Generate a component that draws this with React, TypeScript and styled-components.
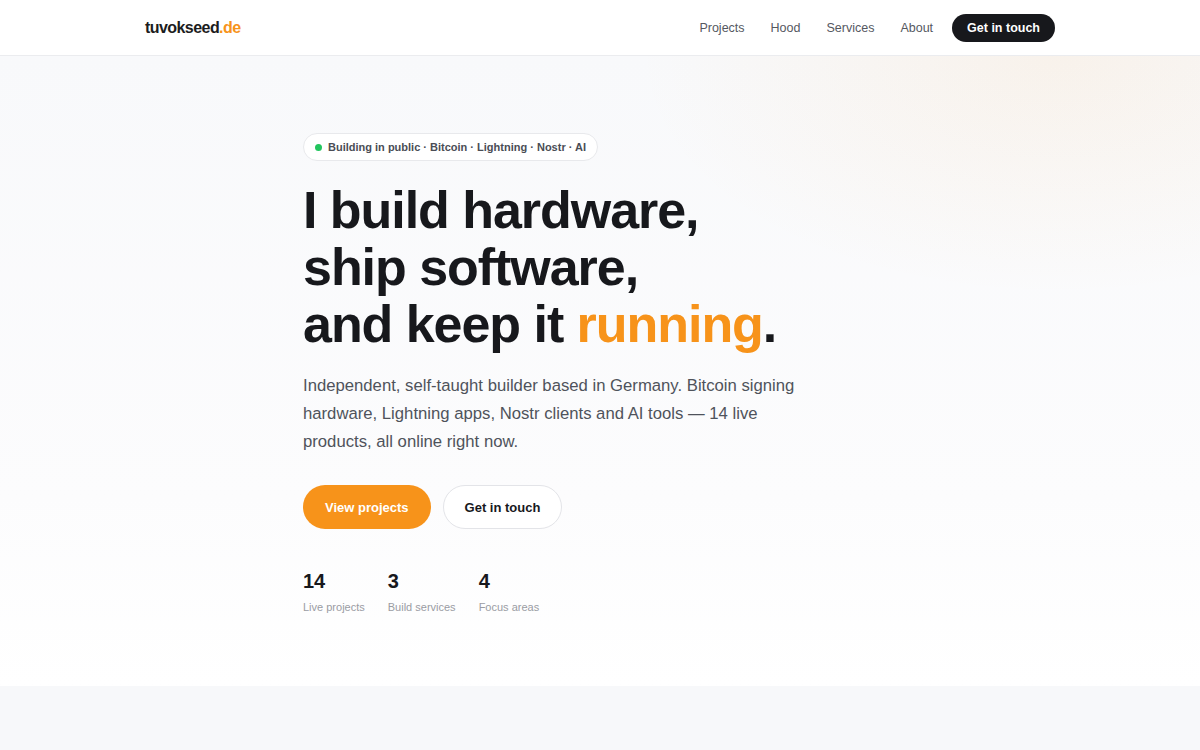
import React from "react";
import styled, { createGlobalStyle } from "styled-components";

const Global = createGlobalStyle`
  * { box-sizing: border-box; }
  body {
    margin: 0;
    font-family: "Liberation Sans", Arial, sans-serif;
    color: #17181c;
    background: #ffffff;
    -webkit-font-smoothing: antialiased;
  }
`;

const Header = styled.header`
  height: 56px;
  border-bottom: 1px solid #ebecef;
  background: #ffffff;
`;

const HeaderInner = styled.div`
  max-width: 910px;
  height: 100%;
  margin: 0 auto;
  display: flex;
  align-items: center;
  justify-content: space-between;
`;

const Logo = styled.a`
  font-size: 16px;
  font-weight: 700;
  letter-spacing: -0.035em;
  color: #1b1c20;
  text-decoration: none;
  span { color: #f7931a; }
`;

const Nav = styled.nav`
  display: flex;
  align-items: center;
  gap: 26px;
`;

const NavLink = styled.a`
  font-size: 12.5px;
  color: #55585f;
  text-decoration: none;
`;

const NavButton = styled.a`
  margin-left: -7px;
  height: 28px;
  padding: 0 15px;
  display: inline-flex;
  align-items: center;
  border-radius: 999px;
  background: #17181c;
  color: #ffffff;
  font-size: 12.5px;
  font-weight: 700;
  text-decoration: none;
`;

const Hero = styled.section`
  height: 630px;
  background:
    radial-gradient(ellipse 420px 240px at 88% 0%, rgba(247, 147, 26, 0.07), rgba(247, 147, 26, 0) 100%),
    linear-gradient(180deg, #f8f9fb 0%, #fcfcfd 70%, #ffffff 100%);
`;

const HeroInner = styled.div`
  max-width: 594px;
  margin: 0 auto;
  padding-top: 77px;
`;

const Badge = styled.div`
  display: inline-flex;
  align-items: center;
  gap: 6px;
  height: 28px;
  padding: 0 11px 0 11px;
  border: 1px solid #e8e9ec;
  border-radius: 999px;
  background: #ffffff;
  font-size: 11px;
  font-weight: 700;
  color: #4a4d55;
`;

const Dot = styled.span`
  width: 7px;
  height: 7px;
  border-radius: 50%;
  background: #22c55e;
`;

const Title = styled.h1`
  margin: 21px 0 0;
  font-size: 52px;
  line-height: 57px;
  font-weight: 700;
  letter-spacing: -0.02em;
  color: #17181c;
  span { color: #f7931a; }
`;

const Lead = styled.p`
  margin: 19px 0 0;
  width: 500px;
  font-size: 16.7px;
  line-height: 28px;
  color: #4f535b;
`;

const Actions = styled.div`
  display: flex;
  gap: 12px;
  margin-top: 29px;
`;

const Button = styled.a<{ $primary?: boolean }>`
  height: 44px;
  padding: 0 ${(p) => (p.$primary ? "22px" : "21px")};
  display: inline-flex;
  align-items: center;
  border-radius: 999px;
  font-size: 13px;
  font-weight: 700;
  text-decoration: none;
  background: ${(p) => (p.$primary ? "#f7931a" : "#ffffff")};
  color: ${(p) => (p.$primary ? "#ffffff" : "#17181c")};
  border: ${(p) => (p.$primary ? "none" : "1px solid #e3e4e8")};
`;

const Stats = styled.div`
  display: flex;
  gap: 23px;
  margin-top: 40px;
`;

const Stat = styled.div`
  display: flex;
  flex-direction: column;
`;

const StatValue = styled.div`
  font-size: 20px;
  line-height: 24px;
  font-weight: 700;
  color: #17181c;
`;

const StatLabel = styled.div`
  margin-top: 7px;
  font-size: 11px;
  line-height: 14px;
  color: #9a9ca3;
`;

const NextSection = styled.section`
  height: 64px;
  background: #f7f8fa;
`;

export default function App() {
  return (
    <>
      <Global />
      <Header>
        <HeaderInner>
          <Logo href="#">
            tuvokseed<span>.de</span>
          </Logo>
          <Nav>
            <NavLink href="#">Projects</NavLink>
            <NavLink href="#">Hood</NavLink>
            <NavLink href="#">Services</NavLink>
            <NavLink href="#">About</NavLink>
            <NavButton href="#">Get in touch</NavButton>
          </Nav>
        </HeaderInner>
      </Header>
      <Hero>
        <HeroInner>
          <Badge>
            <Dot />
            Building in public · Bitcoin · Lightning · Nostr · AI
          </Badge>
          <Title>
            I build hardware,
            <br />
            ship software,
            <br />
            and keep it <span>running</span>.
          </Title>
          <Lead>
            Independent, self-taught builder based in Germany. Bitcoin signing
            hardware, Lightning apps, Nostr clients and AI tools — 14 live
            products, all online right now.
          </Lead>
          <Actions>
            <Button $primary href="#">View projects</Button>
            <Button href="#">Get in touch</Button>
          </Actions>
          <Stats>
            <Stat>
              <StatValue>14</StatValue>
              <StatLabel>Live projects</StatLabel>
            </Stat>
            <Stat>
              <StatValue>3</StatValue>
              <StatLabel>Build services</StatLabel>
            </Stat>
            <Stat>
              <StatValue>4</StatValue>
              <StatLabel>Focus areas</StatLabel>
            </Stat>
          </Stats>
        </HeroInner>
      </Hero>
      <NextSection />
    </>
  );
}
